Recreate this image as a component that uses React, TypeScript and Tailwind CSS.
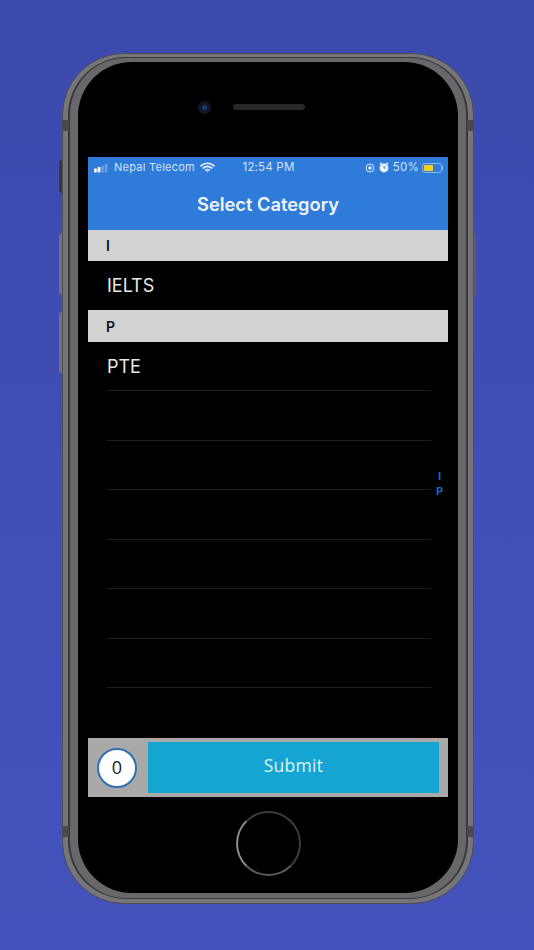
import React from 'react';

const dividerRows = [0, 1, 2, 3, 4, 5];

function StatusBar() {
  return (
    <div className="flex h-[21px] items-center justify-between pl-[6px] pr-[5px] text-[11px] text-[#d3e2f6]">
      <div className="flex flex-1 items-center">
        <svg width="17" height="10" viewBox="0 0 17 10" className="mr-[3px]">
          <rect x="0" y="5.5" width="2.8" height="4" rx="0.8" fill="#fff" />
          <rect x="3.6" y="4" width="2.8" height="5.5" rx="0.8" fill="#fff" />
          <rect x="7.2" y="2.5" width="2.6" height="7" rx="0.6" fill="#6d9fe0" />
          <rect x="10.8" y="0.5" width="2.6" height="9" rx="0.6" fill="#6d9fe0" />
        </svg>
        <span className="tracking-[0.25px]">Nepal Telecom</span>
        <svg width="15" height="11" viewBox="0 0 15 11" className="ml-[5px]" fill="none" stroke="#f0f5fc" strokeLinecap="round">
          <path d="M1 3.8C4.8 0.4 10.2 0.4 14 3.8" strokeWidth="1.7" />
          <path d="M3.4 6C5.8 4 9.2 4 11.6 6" strokeWidth="1.7" />
          <path d="M5.8 8.1C6.8 7.4 8.2 7.4 9.2 8.1" strokeWidth="1.7" />
          <circle cx="7.5" cy="9.6" r="0.7" fill="#f0f5fc" stroke="none" />
        </svg>
      </div>
      <span className="w-[74px] text-center text-[11.5px] tracking-[0.2px]">12:54 PM</span>
      <div className="flex flex-1 items-center justify-end">
        <svg width="10" height="10" viewBox="0 0 10 10" fill="none" className="mr-[4px]">
          <circle cx="5" cy="5" r="4" stroke="#d3e2f6" strokeWidth="1" />
          <circle cx="5" cy="5" r="1.8" fill="#e6eefa" />
        </svg>
        <svg width="10" height="11" viewBox="0 0 10 11" className="mr-[4px]">
          <circle cx="5" cy="6" r="4.4" fill="#f3f7fd" />
          <path d="M0.8 2.4L2.6 0.8M9.2 2.4L7.4 0.8" stroke="#f3f7fd" strokeWidth="1.3" />
          <path d="M5 3.4V6H7" stroke="#2f7bd9" strokeWidth="0.9" fill="none" />
        </svg>
        <span className="mr-[3px] text-[11.5px] tracking-[0.2px]">50%</span>
        <div className="flex h-[10px] w-[20px] items-center rounded-[3px] border border-[#8fb5e8] p-[1px]">
          <div className="h-full w-[9px] rounded-[1px] bg-[#f2d21f]" />
        </div>
        <div className="h-[4px] w-[1px] bg-[#8fb5e8]" />
      </div>
    </div>
  );
}

function SectionHeader({ label, height }: { label: string; height: string }) {
  return (
    <div className={`flex items-center bg-[#d2d2d2] pl-[18px] text-[14px] font-semibold text-[#111] ${height}`}>
      {label}
    </div>
  );
}

function Item({ label, height }: { label: string; height: string }) {
  return (
    <div className={`flex items-center pl-[19px] text-[18px] text-[#e8e8e8] ${height}`}>
      {label}
    </div>
  );
}

export default function App() {
  return (
    <div className="h-[950px] w-[534px] overflow-hidden bg-gradient-to-b from-[#3c4aad] to-[#4452bd] pl-[62px] pt-[53px] font-['Inter',sans-serif]">
      <div className="relative h-[851px] w-[412px] rounded-[62px] border border-[#4d4d50] bg-[#767679] px-[5px] pb-[4px] pt-[3px]">
        {/* side buttons */}
        <div className="absolute left-[-4px] top-[106px] h-[33px] w-[3px] rounded-l-sm bg-[#38383c]" />
        <div className="absolute left-[-4px] top-[179px] h-[62px] w-[3px] rounded-l-sm bg-[#6f7080]" />
        <div className="absolute left-[-4px] top-[258px] h-[61px] w-[3px] rounded-l-sm bg-[#6f7080]" />
        <div className="absolute right-[-3px] top-[179px] h-[64px] w-[2px] rounded-r-sm bg-[#5c5c64]" />

        {/* antenna bands */}
        <div className="absolute left-0 top-[66px] h-[11px] w-[6px] bg-[#4a4a4d]" />
        <div className="absolute right-0 top-[66px] h-[11px] w-[6px] bg-[#4a4a4d]" />
        <div className="absolute bottom-[66px] left-0 h-[11px] w-[6px] bg-[#4a4a4d]" />
        <div className="absolute bottom-[66px] right-0 h-[11px] w-[6px] bg-[#4a4a4d]" />

        <div className="h-full w-full rounded-[58px] border-x-2 border-y border-[#39393b] bg-[#68686b] px-[8px] pb-[5px] pt-[4px]">
          <div className="flex h-full w-full flex-col items-center rounded-[54px] bg-black">
            {/* camera and speaker */}
            <div className="flex h-[95px] w-full items-center justify-center pb-[5px] pr-[34px]">
              <div className="mr-[22px] flex h-[13px] w-[13px] items-center justify-center rounded-full bg-[#15171f]">
                <div className="h-[5px] w-[5px] rounded-full bg-[#1d3a78]" />
              </div>
              <div className="h-[6px] w-[72px] rounded-full bg-[#28282a]" />
            </div>

            {/* screen */}
            <div className="relative h-[640px] w-[360px] shrink-0 bg-black">
              <div className="h-[73px] bg-[#2f7bd9]">
                <StatusBar />
                <div className="flex h-[52px] items-center justify-center pt-[1px] text-[18.3px] font-semibold text-[#eef4fc]">
                  Select Category
                </div>
              </div>
              <SectionHeader label="I" height="h-[31px]" />
              <Item label="IELTS" height="h-[49px]" />
              <SectionHeader label="P" height="h-[32px]" />
              <Item label="PTE" height="h-[48px]" />
              <div className="pl-[19px] pr-[17px]">
                <div className="h-px bg-[#1f1f1f]" />
                {dividerRows.map((row) => (
                  <div key={row} className="h-[49.5px] border-b border-[#1f1f1f]" />
                ))}
              </div>

              {/* index strip */}
              <div className="absolute right-[4px] top-[312px] flex w-[9px] flex-col items-center text-[11px] leading-[15px] font-bold text-[#1f66c4]">
                <span>I</span>
                <span>P</span>
              </div>

              {/* bottom bar */}
              <div className="absolute inset-x-0 bottom-0 flex h-[59px] items-center bg-[#a9a9a9] px-[9px]">
                <div className="flex h-[40px] w-[40px] shrink-0 items-center justify-center rounded-full border-[2px] border-[#2b73b5] bg-white pb-[1px] text-[18px] text-[#222] font-['Open_Sans',sans-serif]">
                  0
                </div>
                <div className="ml-[11px] flex h-[51px] flex-1 items-center justify-center bg-[#14a5d2] pb-[5px] text-[17.5px] tracking-[0.3px] text-[#dff3f9] font-['Open_Sans',sans-serif]">
                  Submit
                </div>
              </div>
            </div>

            {/* home button */}
            <div className="mt-[14px] h-[65px] w-[65px] shrink-0 rounded-full border-[2px] border-[#3c3c3e] border-b-[#5c5c5e] border-l-[#8a8a8c]" />
          </div>
        </div>
      </div>
    </div>
  );
}
